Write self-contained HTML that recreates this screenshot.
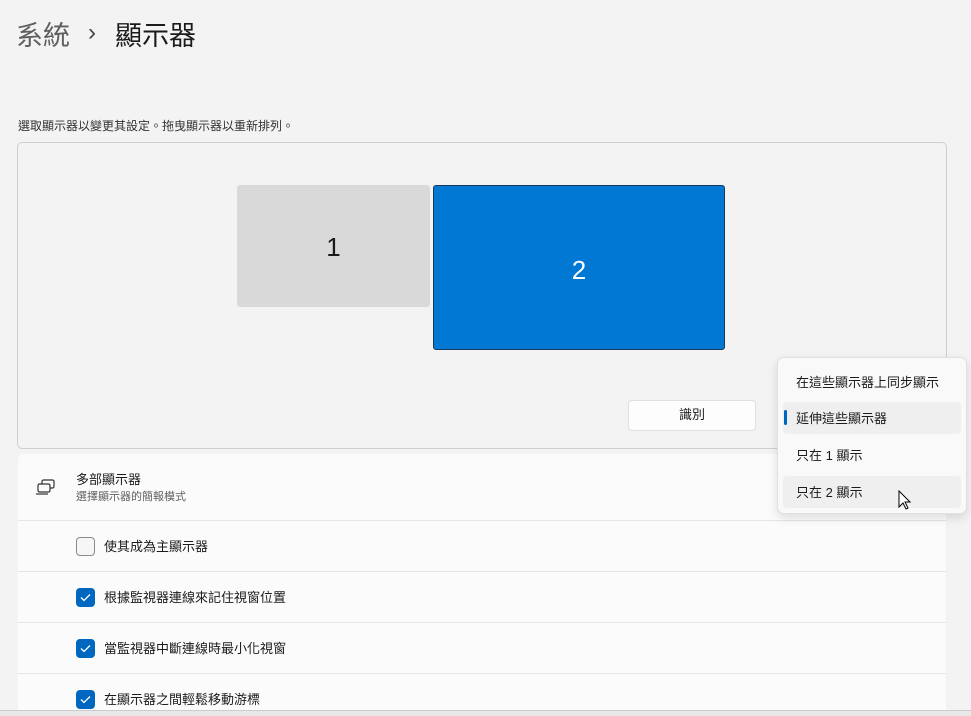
<!DOCTYPE html>
<html><head><meta charset="utf-8"><style>
*{box-sizing:border-box;margin:0;padding:0}
body{width:971px;height:716px;background:#f3f3f3;font-family:"Liberation Sans","Noto Sans CJK TC",sans-serif;color:#1b1b1b;position:relative;overflow:hidden}
.abs{position:absolute}
.t{font-size:13px}
.row{position:absolute;left:18px;width:928px;background:#fbfbfb;border-bottom:1px solid #e5e5e5}
.cb{position:absolute;left:76px;width:19px;height:19px;border-radius:4px}
.on{background:#0067c0}
.on svg{position:absolute;left:4px;top:5px}
.off{border:1px solid #8a8a8a;background:#f6f6f6}
</style></head><body>
<div class="abs" style="left:16px;top:14px;font-size:27px;color:#5f5f5f">系統</div>
<div class="abs" style="left:88px;top:19px;font-size:24px;color:#444">›</div>
<div class="abs" style="left:115px;top:14px;font-size:27px">顯示器</div>
<div class="abs t" style="left:18px;top:117px;font-size:12px;color:#333">選取顯示器以變更其設定。拖曳顯示器以重新排列。</div>
<div class="abs" style="left:17px;top:142px;width:930px;height:307px;border:1px solid #cfcfcf;border-radius:5px;background:#f3f3f3"></div>
<div class="abs" style="left:237px;top:185px;width:193px;height:122px;background:#d9d9d9;border-radius:3px;font-size:26px;text-align:center;line-height:124px">1</div>
<div class="abs" style="left:433px;top:185px;width:292px;height:165px;background:#0078d4;border:1px solid #1a3a5a;border-radius:3px;font-size:26px;color:#fff;text-align:center;line-height:168px">2</div>
<div class="abs t" style="left:628px;top:400px;width:128px;height:31px;background:#fdfdfd;border:1px solid #e0e0e0;border-radius:4px;text-align:center;line-height:28px">識別</div>
<div class="row" style="top:454px;height:67px;border-radius:5px 5px 0 0">
<svg class="abs" style="left:18px;top:25px" width="20" height="16" viewBox="0 0 20 16" fill="none" stroke="#333" stroke-width="1.2"><rect x="6" y="1" width="12" height="8" rx="1.5"/><rect x="2" y="5" width="12" height="8" rx="1.5" fill="#fbfbfb"/><path d="M0 15h12"/></svg>
<div class="abs t" style="left:58px;top:15px">多部顯示器</div>
<div class="abs" style="left:58px;top:34px;font-size:11px;color:#5f5f5f">選擇顯示器的簡報模式</div></div>
<div class="row" style="top:521px;height:51px"><div class="cb off" style="left:58px;top:16px"></div><div class="abs t" style="left:86px;top:15px">使其成為主顯示器</div></div>
<div class="row" style="top:572px;height:51px"><div class="cb on" style="left:58px;top:16px"><svg width="11" height="9" viewBox="0 0 11 9"><path d="M1 4.5l3 3 6-6" stroke="#fff" stroke-width="1.3" fill="none"/></svg></div><div class="abs t" style="left:86px;top:15px">根據監視器連線來記住視窗位置</div></div>
<div class="row" style="top:623px;height:51px"><div class="cb on" style="left:58px;top:16px"><svg width="11" height="9" viewBox="0 0 11 9"><path d="M1 4.5l3 3 6-6" stroke="#fff" stroke-width="1.3" fill="none"/></svg></div><div class="abs t" style="left:86px;top:15px">當監視器中斷連線時最小化視窗</div></div>
<div class="row" style="top:674px;height:37px"><div class="cb on" style="left:58px;top:16px"><svg width="11" height="9" viewBox="0 0 11 9"><path d="M1 4.5l3 3 6-6" stroke="#fff" stroke-width="1.3" fill="none"/></svg></div><div class="abs t" style="left:86px;top:15px">在顯示器之間輕鬆移動游標</div></div>
<div class="abs" style="left:0;top:710px;width:971px;height:6px;background:#e8e8e8;border-top:1px solid #ccc"></div>
<div class="abs" style="left:777px;top:357px;width:190px;height:157px;background:#f9f9f9;border:1px solid #e0e0e0;border-radius:7px;box-shadow:0 4px 10px rgba(0,0,0,.12)">
<div class="abs t" style="left:18px;top:14px">在這些顯示器上同步顯示</div>
<div class="abs" style="left:5px;top:44px;width:178px;height:32px;background:#efefef;border-radius:4px"></div>
<div class="abs" style="left:6px;top:52px;width:3px;height:15px;background:#0067c0;border-radius:2px"></div>
<div class="abs t" style="left:18px;top:50px">延伸這些顯示器</div>
<div class="abs t" style="left:18px;top:87px">只在 1 顯示</div>
<div class="abs" style="left:5px;top:118px;width:178px;height:32px;background:#efefef;border-radius:4px"></div>
<div class="abs t" style="left:18px;top:124px">只在 2 顯示</div>
<svg class="abs" style="left:120px;top:132px" width="14" height="22" viewBox="0 0 14 22"><path d="M1 1v16l4-4 3 6 2-1-3-6h5z" fill="#fff" stroke="#000" stroke-width="1"/></svg>
</div>
</body></html>
